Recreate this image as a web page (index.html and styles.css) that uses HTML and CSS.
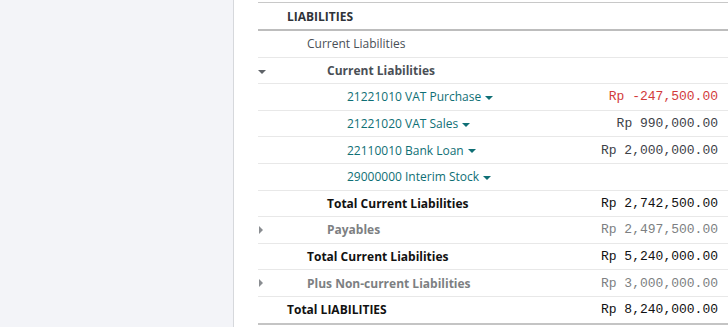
FILE: index.html
```html
<!DOCTYPE html>
<html>
<head>
<meta charset="utf-8">
<link rel="stylesheet" href="styles.css">
</head>
<body>
<div class="page">
  <aside class="sidebar"></aside>
  <main class="content">
    <table class="report">
      <tbody>
        <tr class="row head"><td class="name lvl0 bold">LIABILITIES</td><td class="amt"></td></tr>
        <tr class="row"><td class="name lvl1">Current Liabilities</td><td class="amt"></td></tr>
        <tr class="row"><td class="name lvl2 bold"><span class="caret down"></span>Current Liabilities</td><td class="amt"></td></tr>
        <tr class="row"><td class="name lvl3 acct">21221010 VAT Purchase <span class="dd"></span></td><td class="amt neg">Rp -247,500.00</td></tr>
        <tr class="row"><td class="name lvl3 acct">21221020 VAT Sales <span class="dd"></span></td><td class="amt">Rp 990,000.00</td></tr>
        <tr class="row"><td class="name lvl3 acct">22110010 Bank Loan <span class="dd"></span></td><td class="amt">Rp 2,000,000.00</td></tr>
        <tr class="row"><td class="name lvl3 acct">29000000 Interim Stock <span class="dd"></span></td><td class="amt"></td></tr>
        <tr class="row"><td class="name lvl2 bold total">Total Current Liabilities</td><td class="amt total">Rp 2,742,500.00</td></tr>
        <tr class="row"><td class="name lvl2 bold muted"><span class="caret right"></span>Payables</td><td class="amt muted">Rp 2,497,500.00</td></tr>
        <tr class="row"><td class="name lvl1 bold total">Total Current Liabilities</td><td class="amt total">Rp 5,240,000.00</td></tr>
        <tr class="row"><td class="name lvl1 bold muted"><span class="caret right"></span>Plus Non-current Liabilities</td><td class="amt muted">Rp 3,000,000.00</td></tr>
        <tr class="row last"><td class="name lvl0 bold total">Total LIABILITIES</td><td class="amt total">Rp 8,240,000.00</td></tr>
      </tbody>
    </table>
  </main>
</div>
</body>
</html>
```
FILE: styles.css
```css
html, body {
  margin: 0;
  padding: 0;
  background: #ffffff;
}
body {
  font-family: "Open Sans", "Noto Sans", sans-serif;
  font-size: 12px;
  color: #495057;
}
.page {
  display: flex;
  height: 327px;
  overflow: hidden;
}
.sidebar {
  width: 233px;
  flex: none;
  background: #f3f4f8;
  border-right: 1px solid #d6d8dc;
}
.content {
  flex: 1;
  padding: 2px 0 0 24px;
  min-width: 0;
}
.report {
  width: 100%;
  border-collapse: collapse;
  border-top: 1px solid #c8c8c8;
}
.row td {
  height: 25.6px;
  padding: 0;
  border-bottom: 1px solid #e8e8e8;
  white-space: nowrap;
  vertical-align: middle;
}
.row.head td {
  height: 26px;
  border-bottom: 2px solid #bdbdbd;
}
.row.last td {
  border-bottom: 2px solid #c4c4c4;
}
.name {
  position: relative;
}
.lvl0 { padding-left: 29px !important; }
.lvl1 { padding-left: 49px !important; }
.lvl2 { padding-left: 69px !important; }
.lvl3 { padding-left: 89px !important; }
.bold { font-weight: 700; color: #4a4f55; }
.row.head .name { color: #2f3339; }
.total { color: #111111 !important; }
.muted { color: #7d7f82 !important; }
.acct { color: #0f6f75; }
.amt {
  text-align: right;
  padding-right: 10px !important;
  font-family: "Liberation Mono", monospace;
  font-size: 13px;
  color: #3d4147;
}
.amt.neg { color: #d23b3b; }
.amt.total { color: #111111; }
.amt.muted { color: #858585; }
.dd {
  display: inline-block;
  width: 0;
  height: 0;
  border-left: 4px solid transparent;
  border-right: 4px solid transparent;
  border-top: 4px solid #0f6f75;
  vertical-align: middle;
  margin-left: 1px;
}
.caret {
  position: absolute;
  width: 0;
  height: 0;
}
.caret.down {
  left: 0;
  top: 12px;
  border-left: 4px solid transparent;
  border-right: 4px solid transparent;
  border-top: 4px solid #5f6368;
}
.caret.right {
  left: 1px;
  top: 9px;
  border-top: 4px solid transparent;
  border-bottom: 4px solid transparent;
  border-left: 4px solid #8a8d91;
}
```
